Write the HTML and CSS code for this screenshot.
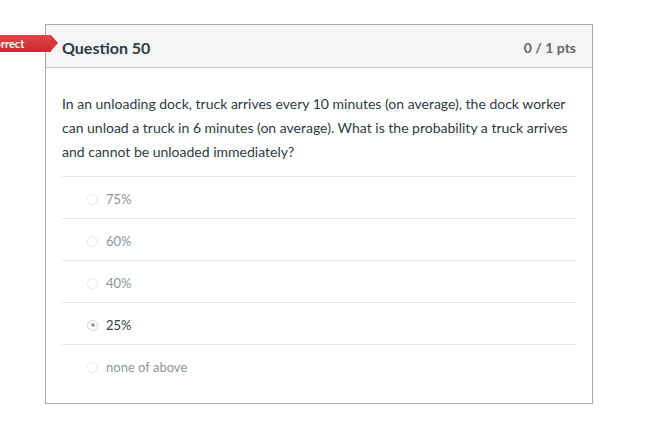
FILE: index.html
```html
<!DOCTYPE html>
<html>
<head>
<meta charset="utf-8">
<link rel="stylesheet" href="styles.css">
</head>
<body>
<div class="card">
  <div class="tag">Incorrect</div>
  <div class="header">
    <div class="title">Question 50</div>
    <div class="pts">0 / 1 pts</div>
  </div>
  <div class="body">
    <p class="question">In an unloading dock, truck arrives every 10 minutes (on average), the dock worker can unload a truck in 6 minutes (on average). What is the probability a truck arrives and cannot be unloaded immediately?</p>
    <div class="answers">
      <div class="answer"><span class="radio"></span><span class="label">75%</span></div>
      <div class="answer"><span class="radio"></span><span class="label">60%</span></div>
      <div class="answer"><span class="radio"></span><span class="label">40%</span></div>
      <div class="answer selected"><span class="radio"></span><span class="label">25%</span></div>
      <div class="answer"><span class="radio"></span><span class="label">none of above</span></div>
    </div>
  </div>
</div>
</body>
</html>
```
FILE: styles.css
```css
html, body {
  margin: 0;
  padding: 0;
  background: #fff;
  font-family: Lato, "Liberation Sans", sans-serif;
}
body {
  padding-top: 24px;
  padding-left: 45px;
}
.card {
  position: relative;
  width: 546px;
  height: 378px;
  border: 1px solid #a9a9a9;
  box-sizing: content-box;
}
.tag {
  position: absolute;
  left: -78px;
  top: 10px;
  width: 83px;
  height: 17px;
  line-height: 17px;
  padding-left: 12px;
  box-sizing: border-box;
  background: linear-gradient(#e4444a, #c42a2f);
  color: #fff;
  font-size: 11px;
  font-weight: 700;
  z-index: 2;
}
.tag::after {
  content: "";
  position: absolute;
  right: -7px;
  top: 0;
  border-top: 8.5px solid transparent;
  border-bottom: 8.5px solid transparent;
  border-left: 7px solid #d5363b;
}
.header {
  display: flex;
  justify-content: space-between;
  align-items: center;
  height: 42px;
  padding: 0 16px;
  background: #f5f5f5;
  border-bottom: 1px solid #c7c7c7;
}
.title {
  font-size: 16px;
  font-weight: 700;
  color: #2d3b45;
  padding-top: 2px;
}
.pts {
  font-size: 14px;
  font-weight: 700;
  color: #666;
  padding-top: 2px;
}
.body {
  padding: 24px 16px 0 16px;
}
.question {
  margin: 0 0 12px 0;
  font-size: 14px;
  line-height: 24px;
  color: #2d3b45;
}
.answer {
  display: flex;
  align-items: center;
  border-top: 1px solid #e6e6e6;
  padding-left: 25px;
  padding-top: 3px;
  box-sizing: content-box;
  height: 38px;
}
.answer .radio {
  width: 9px;
  height: 9px;
  border: 1px solid #e8e8e8;
  border-radius: 50%;
  margin-right: 8px;
  position: relative;
}
.answer .label {
  font-size: 13px;
  color: #8b969e;
}
.answer.selected .label {
  color: #2d3b45;
}
.answer.selected .radio {
  border-color: #d0d0d0;
}
.answer.selected .radio::after {
  content: "";
  position: absolute;
  left: 2.5px;
  top: 2.5px;
  width: 4px;
  height: 4px;
  border-radius: 50%;
  background: #a0a0a0;
}
```
